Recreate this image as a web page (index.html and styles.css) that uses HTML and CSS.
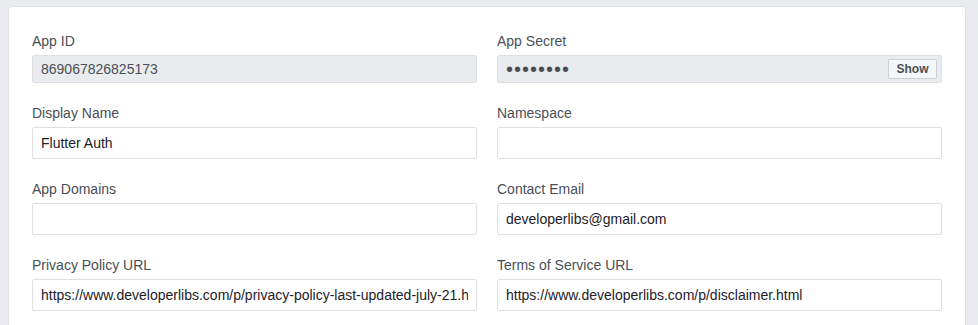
FILE: index.html
```html
<!DOCTYPE html>
<html lang="en">
<head>
  <meta charset="UTF-8" />
  <title>Basic Settings</title>
  <link rel="stylesheet" href="styles.css">
</head>
<body>
  <div class="settings-card">
    <div class="settings-grid">
      <div class="field">
        <label class="field-label">App ID</label>
        <input class="field-input readonly" type="text" value="869067826825173" readonly>
      </div>
      <div class="field">
        <label class="field-label">App Secret</label>
        <div class="field-input readonly secret">
          <span class="secret-dots">••••••••</span>
          <button class="btn-show">Show</button>
        </div>
      </div>
      <div class="field">
        <label class="field-label">Display Name</label>
        <input class="field-input" type="text" value="Flutter Auth">
      </div>
      <div class="field">
        <label class="field-label">Namespace</label>
        <input class="field-input" type="text" value="">
      </div>
      <div class="field">
        <label class="field-label">App Domains</label>
        <input class="field-input" type="text" value="">
      </div>
      <div class="field">
        <label class="field-label">Contact Email</label>
        <input class="field-input" type="text" value="developerlibs@gmail.com">
      </div>
      <div class="field">
        <label class="field-label">Privacy Policy URL</label>
        <input class="field-input" type="text" value="https://www.developerlibs.com/p/privacy-policy-last-updated-july-21.html">
      </div>
      <div class="field">
        <label class="field-label">Terms of Service URL</label>
        <input class="field-input" type="text" value="https://www.developerlibs.com/p/disclaimer.html">
      </div>
    </div>
  </div>
</body>
</html>
```

FILE: styles.css
```css
:root {
  --bg-page: #e9ebee;
  --bg-card: #ffffff;
  --bg-readonly: #e9ebee;
  --border: #dddfe2;
  --border-btn: #ccd0d5;
  --text-label: #4b4f56;
  --text-input: #1d2129;
  --font: 'Liberation Sans', Arial, Helvetica, sans-serif;
}
body {
  background: var(--bg-page);
  font-family: var(--font);
  margin: 6px 12px 0 8px;
}
.settings-card {
  background: var(--bg-card);
  border: 1px solid var(--border);
  border-radius: 4px;
  padding: 25px 23px 24px 23px;
}
.settings-grid {
  display: grid;
  grid-template-columns: 1fr 1fr;
  column-gap: 20px;
  row-gap: 21px;
}
.field {
  display: flex;
  flex-direction: column;
}
.field-label {
  font-size: 14px;
  line-height: 18px;
  color: var(--text-label);
  margin-bottom: 5px;
}
.field-input {
  box-sizing: border-box;
  height: 32px;
  width: 100%;
  margin: 0;
  padding: 0 8px;
  border: 1px solid var(--border);
  border-radius: 2px;
  background: #fff;
  font-family: var(--font);
  font-size: 14px;
  color: var(--text-input);
  outline: none;
}
.field-input.readonly {
  height: 28px;
  background: var(--bg-readonly);
  color: var(--text-label);
}
.secret {
  display: flex;
  align-items: center;
  justify-content: space-between;
  padding-right: 4px;
}
.secret-dots {
  font-size: 20px;
  letter-spacing: 1px;
  color: var(--text-label);
  line-height: 20px;
}
.btn-show {
  height: 20px;
  width: 49px;
  padding: 0;
  border: 1px solid var(--border-btn);
  border-radius: 2px;
  background: #f5f6f7;
  font-family: var(--font);
  font-size: 12px;
  font-weight: bold;
  color: var(--text-label);
}
```
